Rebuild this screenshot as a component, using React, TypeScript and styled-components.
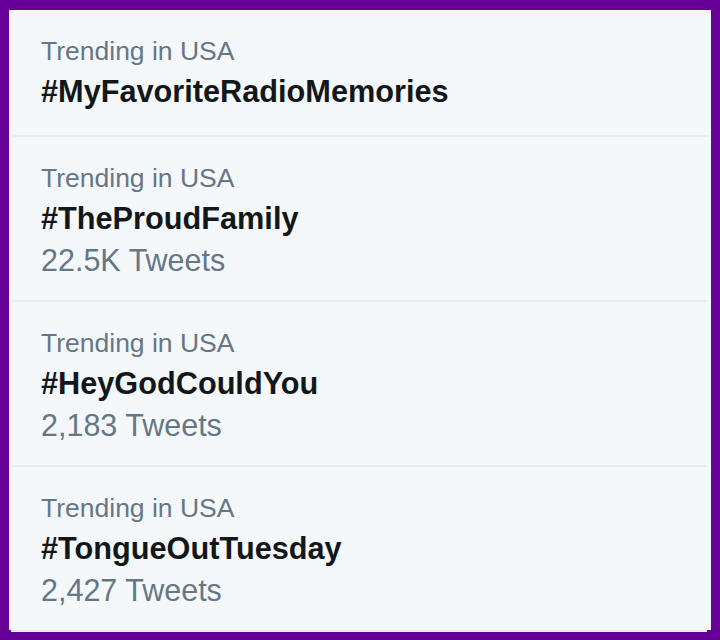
import React from "react";
import styled, { createGlobalStyle } from "styled-components";

const GlobalStyle = createGlobalStyle`
  html, body {
    margin: 0;
    padding: 0;
    background: #660099;
  }
  body {
    font-family: "Liberation Sans", Arial, Helvetica, sans-serif;
    -webkit-font-smoothing: antialiased;
  }
`;

const Frame = styled.div`
  padding: 10px 9px 10px 9px;
  box-sizing: border-box;
  width: 720px;
  height: 640px;
`;

const Panel = styled.div`
  background: #f5f8fa;
  height: 100%;
  box-sizing: border-box;
  padding: 0 4px 0 2px;
  display: flex;
  flex-direction: column;
`;

const Trend = styled.div`
  padding: 23px 0 21px 30px;
  border-bottom: 2px solid #e6ecf0;
  display: flex;
  flex-direction: column;
`;

const Context = styled.div`
  font-size: 26.5px;
  line-height: 36px;
  color: #657786;
`;

const Name = styled.div`
  font-size: 30.7px;
  line-height: 45px;
  font-weight: 700;
  color: #14171a;
`;

const Count = styled.div`
  font-size: 30.5px;
  line-height: 38px;
  color: #657786;
`;

type TrendItem = { name: string; count?: string };

const trends: TrendItem[] = [
  { name: "#MyFavoriteRadioMemories" },
  { name: "#TheProudFamily", count: "22.5K Tweets" },
  { name: "#HeyGodCouldYou", count: "2,183 Tweets" },
  { name: "#TongueOutTuesday", count: "2,427 Tweets" },
];

export default function App() {
  return (
    <>
      <GlobalStyle />
      <Frame>
        <Panel>
          {trends.map((t) => (
            <Trend key={t.name}>
              <Context>Trending in USA</Context>
              <Name>{t.name}</Name>
              {t.count && <Count>{t.count}</Count>}
            </Trend>
          ))}
        </Panel>
      </Frame>
    </>
  );
}
